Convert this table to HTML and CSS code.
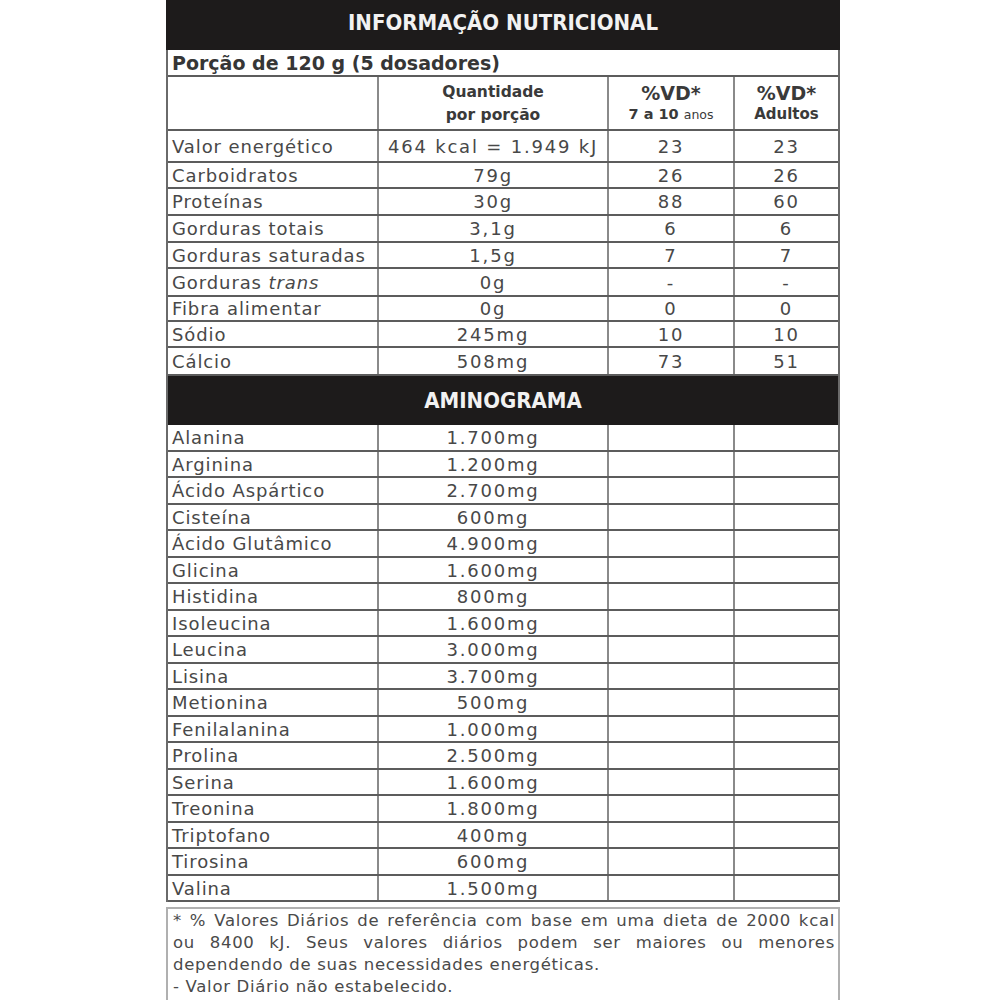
FILE: index.html
```html
<!DOCTYPE html>
<html lang="pt-BR">
<head>
<meta charset="utf-8">
<title>Informação Nutricional</title>
<link rel="stylesheet" href="styles.css">
</head>
<body>
<div class="label">
  <div class="band title">INFORMAÇÃO NUTRICIONAL</div>
  <div class="grid">
    <div class="row portion"><div class="cell full">Porção de 120 g (5 dosadores)</div></div>
    <div class="row head">
      <div class="cell"></div>
      <div class="cell c qty">Quantidade<br>por porção</div>
      <div class="cell c vd"><span class="vdt">%VD*</span><span class="vds">7 a 10 <small>anos</small></span></div>
      <div class="cell c vd"><span class="vdt">%VD*</span><span class="vds ad">Adultos</span></div>
    </div>
    <div class="row h32"><div class="cell">Valor energético</div><div class="cell c">464 kcal = 1.949 kJ</div><div class="cell c">23</div><div class="cell c">23</div></div>
    <div class="row h26"><div class="cell">Carboidratos</div><div class="cell c">79g</div><div class="cell c">26</div><div class="cell c">26</div></div>
    <div class="row h27"><div class="cell">Proteínas</div><div class="cell c">30g</div><div class="cell c">88</div><div class="cell c">60</div></div>
    <div class="row h27"><div class="cell">Gorduras totais</div><div class="cell c">3,1g</div><div class="cell c">6</div><div class="cell c">6</div></div>
    <div class="row h26"><div class="cell">Gorduras saturadas</div><div class="cell c">1,5g</div><div class="cell c">7</div><div class="cell c">7</div></div>
    <div class="row h28"><div class="cell"><span>Gorduras <em>trans</em></span></div><div class="cell c">0g</div><div class="cell c">-</div><div class="cell c">-</div></div>
    <div class="row h25"><div class="cell">Fibra alimentar</div><div class="cell c">0g</div><div class="cell c">0</div><div class="cell c">0</div></div>
    <div class="row h26"><div class="cell">Sódio</div><div class="cell c">245mg</div><div class="cell c">10</div><div class="cell c">10</div></div>
    <div class="row h28"><div class="cell">Cálcio</div><div class="cell c">508mg</div><div class="cell c">73</div><div class="cell c">51</div></div>
  </div>
  <div class="band amino">AMINOGRAMA</div>
  <div class="grid">
    <div class="row h27"><div class="cell">Alanina</div><div class="cell c">1.700mg</div><div class="cell"></div><div class="cell"></div></div>
    <div class="row h26"><div class="cell">Arginina</div><div class="cell c">1.200mg</div><div class="cell"></div><div class="cell"></div></div>
    <div class="row h27"><div class="cell">Ácido Aspártico</div><div class="cell c">2.700mg</div><div class="cell"></div><div class="cell"></div></div>
    <div class="row h26"><div class="cell">Cisteína</div><div class="cell c">600mg</div><div class="cell"></div><div class="cell"></div></div>
    <div class="row h27"><div class="cell">Ácido Glutâmico</div><div class="cell c">4.900mg</div><div class="cell"></div><div class="cell"></div></div>
    <div class="row h26"><div class="cell">Glicina</div><div class="cell c">1.600mg</div><div class="cell"></div><div class="cell"></div></div>
    <div class="row h27"><div class="cell">Histidina</div><div class="cell c">800mg</div><div class="cell"></div><div class="cell"></div></div>
    <div class="row h26"><div class="cell">Isoleucina</div><div class="cell c">1.600mg</div><div class="cell"></div><div class="cell"></div></div>
    <div class="row h27"><div class="cell">Leucina</div><div class="cell c">3.000mg</div><div class="cell"></div><div class="cell"></div></div>
    <div class="row h26"><div class="cell">Lisina</div><div class="cell c">3.700mg</div><div class="cell"></div><div class="cell"></div></div>
    <div class="row h27"><div class="cell">Metionina</div><div class="cell c">500mg</div><div class="cell"></div><div class="cell"></div></div>
    <div class="row h26"><div class="cell">Fenilalanina</div><div class="cell c">1.000mg</div><div class="cell"></div><div class="cell"></div></div>
    <div class="row h27"><div class="cell">Prolina</div><div class="cell c">2.500mg</div><div class="cell"></div><div class="cell"></div></div>
    <div class="row h26"><div class="cell">Serina</div><div class="cell c">1.600mg</div><div class="cell"></div><div class="cell"></div></div>
    <div class="row h27"><div class="cell">Treonina</div><div class="cell c">1.800mg</div><div class="cell"></div><div class="cell"></div></div>
    <div class="row h26"><div class="cell">Triptofano</div><div class="cell c">400mg</div><div class="cell"></div><div class="cell"></div></div>
    <div class="row h27"><div class="cell">Tirosina</div><div class="cell c">600mg</div><div class="cell"></div><div class="cell"></div></div>
    <div class="row h26"><div class="cell">Valina</div><div class="cell c">1.500mg</div><div class="cell"></div><div class="cell"></div></div>
  </div>
  <div class="note">
    <p class="just">* % Valores Diários de referência com base em uma dieta de 2000 kcal ou 8400 kJ. Seus valores diários podem ser maiores ou menores dependendo de suas necessidades energéticas.</p>
    <p>- Valor Diário não estabelecido.</p>
  </div>
</div>
</body>
</html>
```

FILE: styles.css
```css
html, body {
  margin: 0;
  padding: 0;
  background: #ffffff;
}

body {
  font-family: "DejaVu Sans", "Liberation Sans", sans-serif;
  color: #484848;
}

.label {
  width: 674px;
  margin-left: 166px;
}

.band {
  background: #1d1b1b;
  color: #f2f2f2;
  font-weight: 700;
  font-stretch: condensed;
  font-size: 22px;
  text-align: center;
  box-sizing: border-box;
}

.title {
  height: 50px;
  line-height: 46px;
}

.amino {
  height: 49px;
  line-height: 50px;
  border-left: 2px solid #6a6a6a;
  border-right: 2px solid #6a6a6a;
}

.grid {
  border-left: 2px solid #6a6a6a;
  border-right: 2px solid #6a6a6a;
}

.row {
  display: grid;
  grid-template-columns: 211px 230px 126px 103px;
  box-sizing: border-box;
  border-bottom: 2px solid #5c5c5c;
  font-size: 18px;
}

.cell {
  display: flex;
  align-items: center;
  padding-left: 4px;
  border-right: 2px solid #8a8a8a;
  letter-spacing: 0.9px;
  white-space: nowrap;
  overflow: hidden;
}

.cell:last-child {
  border-right: none;
}

.cell.c {
  justify-content: center;
  padding-left: 0;
  letter-spacing: 1.8px;
}

.cell.full {
  grid-column: 1 / -1;
  border-right: none;
}

em {
  font-style: italic;
}

.portion {
  height: 27px;
}

.portion .cell {
  font-weight: 700;
  font-size: 19px;
  letter-spacing: 0;
  color: #363636;
}

.head {
  height: 54px;
}

.head .cell {
  color: #3a3a3a;
}

.head .cell.qty {
  font-weight: 700;
  font-size: 15.5px;
  line-height: 23px;
  letter-spacing: 0;
  text-align: center;
  padding-top: 1px;
}

.head .cell.vd {
  flex-direction: column;
  letter-spacing: 0;
  font-weight: 700;
}

.vdt {
  font-size: 19px;
  line-height: 22px;
}

.vds {
  font-size: 14.5px;
  line-height: 21px;
}

.vds small {
  font-size: 12.5px;
  font-weight: 400;
}

.vds.ad {
  font-size: 15px;
}

.h25 { height: 25px; }
.h26 { height: 26px; }
.h27 { height: 27px; }
.h28 { height: 28px; }
.h32 { height: 32px; }

.note {
  margin-top: 5px;
  border: 2px solid #b0b0b0;
  border-bottom: none;
  padding: 1px 3px 4px 5px;
  font-size: 16.5px;
  line-height: 22px;
  letter-spacing: 0.7px;
  color: #4a4a4a;
}

.note p {
  margin: 0;
}

.note .just {
  text-align: justify;
}
```
